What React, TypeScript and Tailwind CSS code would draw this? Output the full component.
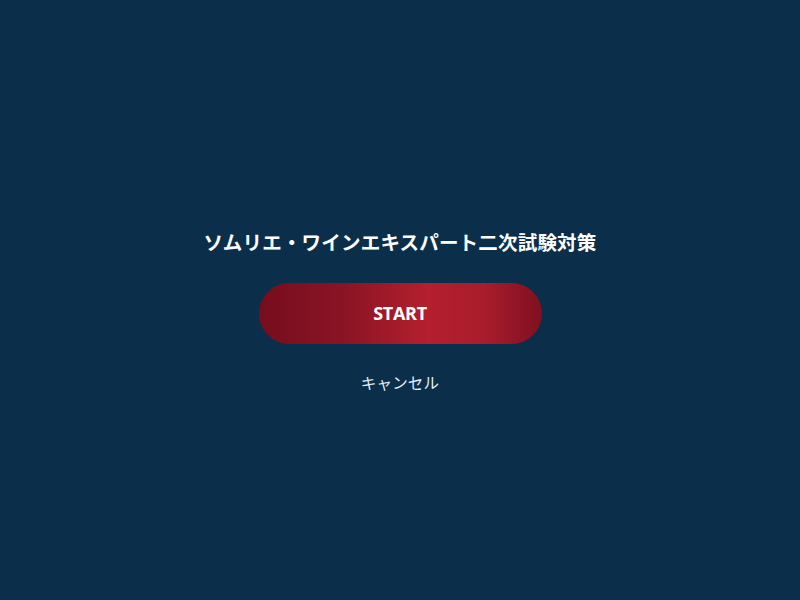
import React from "react";

const App = () => {
  return (
    <div
      className="w-[800px] h-[600px] bg-[#0b2f4b] flex flex-col items-center text-white"
      style={{ fontFamily: '"Noto Sans CJK JP", "Open Sans", sans-serif' }}
    >
      <h1 className="mt-[229px] text-[19.5px] leading-[26px] font-bold tracking-[0.2px]">
        ソムリエ・ワインエキスパート二次試験対策
      </h1>
      <button className="mt-[28px] w-[283px] h-[61px] rounded-full bg-[linear-gradient(90deg,#760d1d_0%,#8a1424_30%,#b51f2e_60%,#a81c2c_80%,#7f1020_100%)] text-[18px] font-bold font-['Open_Sans'] tracking-[-0.3px]">
        START
      </button>
      <button className="mt-[26px] text-[15.5px] leading-[24px] text-[#e8eef3] tracking-[0.2px]">
        キャンセル
      </button>
    </div>
  );
};

export default App;
